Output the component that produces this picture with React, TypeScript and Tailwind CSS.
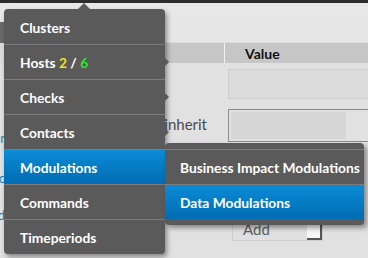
import React from 'react'
import clsx from 'clsx'

const mainItems = [
  { key: 'clusters', label: 'Clusters' },
  { key: 'hosts', label: 'Hosts', sub: true },
  { key: 'checks', label: 'Checks', sub: true },
  { key: 'contacts', label: 'Contacts', sub: true },
  { key: 'modulations', label: 'Modulations', active: true },
  { key: 'commands', label: 'Commands' },
  { key: 'timeperiods', label: 'Timeperiods' },
]

function MenuItem({
  children,
  first,
  active,
  sub,
  className,
}: {
  children: React.ReactNode
  first?: boolean
  active?: boolean
  sub?: boolean
  className?: string
}) {
  return (
    <div
      className={clsx(
        'relative flex items-center pt-[2px] text-[13.8px] font-bold text-white whitespace-nowrap',
        first ? 'border-t border-t-transparent' : 'border-t border-t-[#7c7c7c]',
        active && 'bg-[linear-gradient(180deg,#0b8bd6_0%,#006cb3_100%)]',
        className,
      )}
    >
      {children}
      {sub && (
        <span className="absolute left-full top-1/2 -translate-y-1/2 w-0 h-0 border-y-[4px] border-y-transparent border-l-[4px] border-l-[#5a5a5a]" />
      )}
    </div>
  )
}

export default function App() {
  return (
    <div
      className="relative w-[368px] h-[258px] overflow-hidden bg-[#e1e1e1]"
      style={{ fontFamily: 'Lato, "Open Sans", sans-serif' }}
    >
      {/* page behind the menu */}
      <div className="h-[3px] bg-[#2c2c2c]" />
      <div className="h-[19px] bg-[#e7e7e7]" />
      <div className="flex h-[21px]">
        <div className="w-[5px] bg-[#6a6a6a]" />
        <div className="flex-1 bg-[#e6e6e6] border-b border-[#d9d9d9]" />
      </div>
      <div className="flex h-[20px]">
        <div className="w-[150px] bg-[#dcdcdc]" />
        <div className="w-[74px] bg-[#c6c6c6]" />
        <div className="w-px bg-[#f2f2f2]" />
        <div className="flex-1 flex items-center pl-[20px] bg-[#c6c6c6] text-[14px] font-bold text-[#111]">
          Value
        </div>
      </div>

      <div className="flex">
        <div className="w-[5px] flex flex-col overflow-hidden text-[13px] leading-[16px] text-[#2a7fc0]">
          <div className="mt-[67px] flex justify-end whitespace-nowrap">Parameter</div>
          <div className="mt-[24px] flex justify-end whitespace-nowrap">Logic</div>
          <div className="mt-[21px] flex justify-end whitespace-nowrap">Added</div>
        </div>
        <div className="flex-1 flex flex-col">
          <div className="mt-[6px] flex h-[30px]">
            <div className="w-[223px]" />
            <div className="flex-1 bg-[#dbdbdb] border-y border-l border-[#cecece]" />
          </div>
          <div className="mt-[10px] flex h-[33px]">
            <div className="w-[223px] flex justify-end pr-[21px] pt-[6px] text-[15px] leading-[18px] text-[#4a4a4a]">
              inherit
            </div>
            <div className="flex-1 border-y border-l border-[#8c8c8c]">
              <div className="m-[2px] w-[115px] h-[27px] bg-[#d6d6d6]" />
            </div>
          </div>
          <div className="mt-[76px] flex h-[23px]">
            <div className="w-[227px]" />
            <div className="w-[91px] flex border border-[#cfcfcf] bg-[#e0e0e0]">
              <div className="flex-1 flex items-center pl-[10px] text-[15px] text-[#5e5e5e]">Add</div>
              <div className="w-[15px] flex justify-center pt-[2px] bg-[#f6f6f6] border-r-2 border-b-2 border-[#555]">
                <span className="w-0 h-0 border-x-[3px] border-x-transparent border-t-[4px] border-t-[#111]" />
              </div>
            </div>
          </div>
        </div>
      </div>

      {/* main dropdown */}
      <div className="absolute left-[4px] top-[9px] w-[161px] rounded-[4px] bg-[#5a5a5a] shadow-[2px_3px_5px_rgba(0,0,0,0.4)]">
        <span className="absolute -top-[6px] left-[74px] w-0 h-0 border-x-[6px] border-x-transparent border-b-[6px] border-b-[#5a5a5a]" />
        {mainItems.map((item, i) => (
          <MenuItem
            key={item.key}
            first={i === 0}
            active={item.active}
            sub={item.sub}
            className="h-[35px] pl-[16px]"
          >
            {item.key === 'hosts' ? (
              <span>
                Hosts <span className="text-[#f5e020]">2</span> / <span className="text-[#2ee52e]">6</span>
              </span>
            ) : (
              item.label
            )}
          </MenuItem>
        ))}
      </div>

      {/* submenu */}
      <div className="absolute left-[165px] top-[143px] w-[199px] pt-[6px] pb-[6px] rounded-[4px] bg-[#5a5a5a] shadow-[3px_3px_5px_rgba(0,0,0,0.4)]">
        <MenuItem className="h-[35px] pl-[15px]">Business Impact Modulations</MenuItem>
        <MenuItem active className="h-[35px] pl-[15px]">
          Data Modulations
        </MenuItem>
      </div>
    </div>
  )
}
